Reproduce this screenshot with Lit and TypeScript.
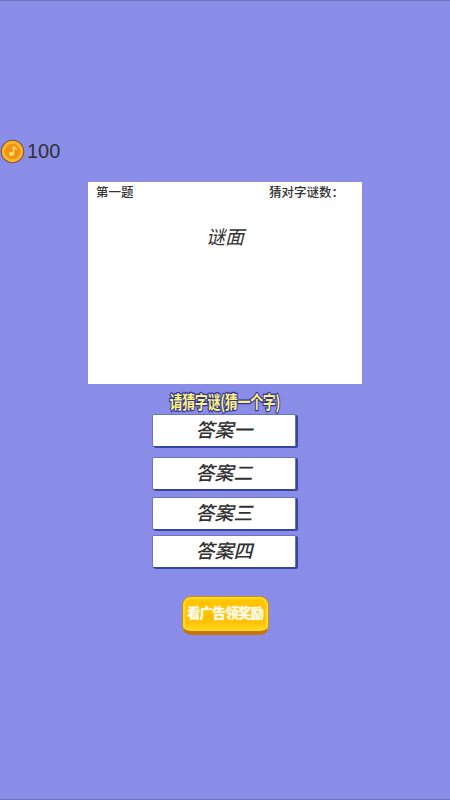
import { LitElement, html, css } from "lit";
import { customElement } from "lit/decorators.js";

const ANSWERS = [
  { text: "答案一", top: 0 },
  { text: "答案二", top: 10 },
  { text: "答案三", top: 7 },
  { text: "答案四", top: 5 },
];

@customElement("app-root")
export class AppRoot extends LitElement {
  static styles = css`
    :host {
      display: block;
      width: 450px;
      height: 800px;
      overflow: hidden;
      font-family: "Noto Sans CJK SC", "Liberation Sans", sans-serif;
    }
    .page {
      box-sizing: border-box;
      height: 800px;
      background: #8a8de8;
      border-top: 1px solid #6f72bd;
      border-bottom: 1px solid #6f72bd;
      padding-top: 137px;
      display: flex;
      flex-direction: column;
      align-items: center;
    }
    .coins {
      align-self: stretch;
      display: flex;
      align-items: center;
      gap: 2px;
      height: 26px;
    }
    .coins svg { display: block; }
    .coins span {
      font: 20px/26px "Liberation Sans", Arial, sans-serif;
      color: #323232;
    }
    .panel {
      margin-top: 18px;
      width: 274px;
      height: 202px;
      background: #fff;
      color: #323232;
      display: flex;
      flex-direction: column;
    }
    .head {
      display: flex;
      justify-content: space-between;
      font-size: 12.5px;
      line-height: 16px;
      font-weight: 500;
      padding: 2px 18px 0 8px;
    }
    .riddle {
      margin-top: 22px;
      text-align: center;
      font-size: 19px;
      line-height: 28px;
      font-style: italic;
    }
    .prompt {
      margin-top: 5px;
      height: 25px;
      font-size: 18px;
      line-height: 24px;
      font-weight: 700;
      color: #fff27a;
      letter-spacing: -0.4px;
      transform: scaleX(0.72);
      -webkit-text-stroke: 2.4px #2f3296;
      paint-order: stroke fill;
      white-space: nowrap;
    }
    .answer {
      box-sizing: border-box;
      width: 144px;
      height: 33px;
      margin-left: -2px;
      background: #fff;
      border-radius: 2px;
      border: 1px solid #6c72c4;
      border-bottom-color: #34469f;
      box-shadow: 2px 1px 0 #34469f;
      color: #323232;
      text-align: center;
      font-size: 19px;
      line-height: 28px;
      font-style: italic;
      font-weight: 500;
    }
    .reward {
      box-sizing: border-box;
      margin-top: 28px;
      width: 87px;
      height: 39px;
      border-radius: 9px;
      border: 1px solid #d98a08;
      border-bottom: 4px solid #c8760c;
      background: linear-gradient(#ffc800, #ffbe00 70%, #ffdc20);
      box-shadow: inset 0 0 0 2px #ffdc30;
      color: #fff;
      text-shadow: 0 0 2px #ffe88a;
      text-align: center;
      font-size: 13.5px;
      line-height: 31px;
      font-weight: 700;
      letter-spacing: -0.8px;
      white-space: nowrap;
    }
  `;

  render() {
    return html`
      <div class="page">
        <div class="coins">
          <svg width="25" height="25" viewBox="0 0 25 25">
            <circle cx="12.5" cy="12.5" r="11.7" fill="#7a5238" />
            <circle cx="12.5" cy="12.5" r="10.7" fill="#fdb52c" />
            <circle cx="12.5" cy="12.5" r="7.8" fill="#f2930f" />
            <path d="M13.5 7.5v7" stroke="#ffe27a" stroke-width="1.6" fill="none" />
            <path d="M13.5 7.5c.8 1.6 2.6 1.6 3 3.2" stroke="#ffe27a" stroke-width="1.4" fill="none" />
            <ellipse cx="11.4" cy="15" rx="2.5" ry="2" fill="#ffe27a" />
          </svg>
          <span>100</span>
        </div>
        <div class="panel">
          <div class="head"><span>第一题</span><span>猜对字谜数：</span></div>
          <div class="riddle">谜面</div>
        </div>
        <div class="prompt">请猜字谜(猜一个字)</div>
        ${ANSWERS.map(
          (a) => html`<div class="answer" style="margin-top:${a.top}px">${a.text}</div>`
        )}
        <div class="reward">看广告领奖励</div>
      </div>
    `;
  }
}
